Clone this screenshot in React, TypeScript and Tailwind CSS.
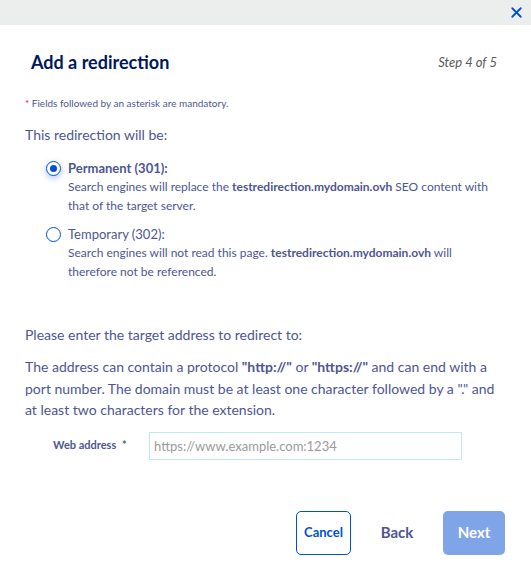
import { X } from 'lucide-react';

function Radio({ checked }: { checked: boolean }) {
  return (
    <span
      className={`mt-[2px] flex h-[15px] w-[15px] shrink-0 items-center justify-center rounded-full border-[1.5px] border-[#0050d7] bg-white ${
        checked ? 'shadow-[0_2px_6px_rgba(0,80,215,0.35)]' : ''
      }`}
    >
      {checked && <span className="h-[7px] w-[7px] rounded-full bg-[#0050d7]" />}
    </span>
  );
}

export default function App() {
  return (
    <div className="flex h-[567px] w-[531px] flex-col bg-white font-['Lato',sans-serif] text-[#4d5693]">
      <div className="flex h-[25px] shrink-0 items-center justify-end bg-[#eceeed] pr-[6px]">
        <X className="h-[17px] w-[17px] text-[#0050d7]" strokeWidth={2.6} />
      </div>

      <div className="flex items-center justify-between pl-[31px] pr-[34px] pt-[24px]">
        <h2 className="text-[18px] font-bold text-[#00185e]">Add a redirection</h2>
        <span className="text-[13px] italic text-[#595959]">Step 4 of 5</span>
      </div>

      <div className="px-[25px]">
        <p className="mt-[20px] text-[10px] leading-[15px]">
          <span className="text-[#e6123d]">*</span> Fields followed by an asterisk are mandatory.
        </p>

        <p className="mt-[14px] text-[14px] leading-[20px]">This redirection will be:</p>

        <div className="mt-[14px] flex flex-col gap-[10px] pl-[21px]">
          <label className="flex gap-[7px]">
            <Radio checked />
            <div className="w-[432px]">
              <div className="text-[13px] font-bold leading-[18px]">Permanent (301):</div>
              <p className="text-[12px] leading-[19px]">
                Search engines will replace the <b>testredirection.mydomain.ovh</b> SEO content with
                that of the target server.
              </p>
            </div>
          </label>
          <label className="flex gap-[7px]">
            <Radio checked={false} />
            <div className="w-[432px]">
              <div className="text-[13px] leading-[18px]">Temporary (302):</div>
              <p className="text-[12px] leading-[19px]">
                Search engines will not read this page. <b>testredirection.mydomain.ovh</b> will
                therefore not be referenced.
              </p>
            </div>
          </label>
        </div>

        <p className="mt-[44px] text-[14px] leading-[20px]">Please enter the target address to redirect to:</p>
        <p className="mt-[11px] text-[14px] leading-[21.5px]">
          The address can contain a protocol <b>"http://"</b> or <b>"https://"</b> and can end with a
          port number. The domain must be at least one character followed by a "." and at least two
          characters for the extension.
        </p>

        <div className="mt-[11px] flex items-center">
          <label className="w-[124px] pl-[28px] text-[11px] font-bold">
            Web address <span className="ml-[3px]">*</span>
          </label>
          <input
            className="h-[28px] w-[313px] border border-[#bfe9f3] px-[4px] text-[13px] text-[#4d5693] outline-none placeholder:text-[#9a9a9a]"
            placeholder="https://www.example.com:1234"
          />
        </div>
      </div>

      <div className="mt-[51px] flex items-center justify-end gap-[20px] pr-[26px]">
        <button className="h-[44px] w-[55px] rounded-[5px] border border-[#0050d7] text-[13px] font-bold text-[#0050d7]">
          Cancel
        </button>
        <button className="h-[44px] w-[52px] text-[15px] font-bold text-[#4d5693]">Back</button>
        <button className="h-[44px] w-[62px] rounded-[5px] bg-[#7fa5e8] text-[15px] font-bold text-white">
          Next
        </button>
      </div>
    </div>
  );
}
